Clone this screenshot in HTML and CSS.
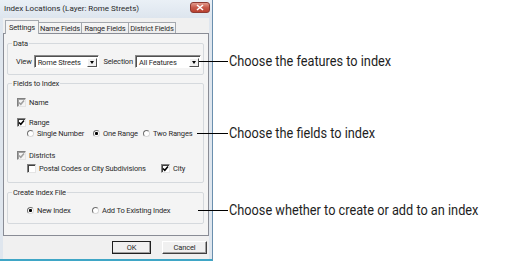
FILE: index.html
```html
<!DOCTYPE html>
<html lang="en">
<head>
  <meta charset="UTF-8">
  <title>Index Locations</title>
  <link rel="stylesheet" href="styles.css">
</head>
<body>
  <div class="figure">
    <div class="window">
      <div class="titlebar">
        <span class="title">Index Locations (Layer: Rome Streets)</span>
        <span class="close">
          <svg width="8" height="7" viewBox="0 0 8 7"><path d="M1 1L7 6M7 1L1 6" stroke="#fff" stroke-width="1.6" fill="none"/></svg>
        </span>
      </div>
      <div class="client">
        <div class="tabs">
          <span class="tab active w-settings">Settings</span>
          <span class="tab w-name">Name Fields</span>
          <span class="tab w-range">Range Fields</span>
          <span class="tab w-district">District Fields</span>
        </div>
        <div class="panel">
          <fieldset class="group group-data">
            <legend>Data</legend>
            <div class="row-data">
              <span>View</span>
              <div class="combo w-view"><span class="combo-text">Rome Streets</span><span class="combo-btn"><i></i></span></div>
              <span class="spacer"></span>
              <span>Selection</span>
              <div class="combo w-selection"><span class="combo-text">All Features</span><span class="combo-btn"><i></i></span></div>
            </div>
          </fieldset>

          <fieldset class="group group-fields">
            <legend>Fields to Index</legend>
            <div class="opt row-top">
              <span class="check disabled"><svg viewBox="0 0 7 7"><path d="M1 3.4L2.8 5.3L6 1.4" /></svg></span>
              <span>Name</span>
            </div>
            <div class="opt row-range">
              <span class="check"><svg viewBox="0 0 7 7"><path d="M1 3.4L2.8 5.3L6 1.4" /></svg></span>
              <span>Range</span>
            </div>
            <div class="radios row-sub">
              <div class="opt w-single"><span class="radio"></span><span>Single Number</span></div>
              <div class="opt w-one"><span class="radio on"></span><span>One Range</span></div>
              <div class="opt"><span class="radio"></span><span>Two Ranges</span></div>
            </div>
            <div class="opt row-districts">
              <span class="check disabled"><svg viewBox="0 0 7 7"><path d="M1 3.4L2.8 5.3L6 1.4" /></svg></span>
              <span>Districts</span>
            </div>
            <div class="radios row-sub row-postal">
              <div class="opt w-postal"><span class="check"></span><span>Postal Codes or City Subdivisions</span></div>
              <div class="opt"><span class="check"><svg viewBox="0 0 7 7"><path d="M1 3.4L2.8 5.3L6 1.4" /></svg></span><span>City</span></div>
            </div>
          </fieldset>

          <fieldset class="group group-create">
            <legend>Create Index File</legend>
            <div class="radios row-sub">
              <div class="opt w-new"><span class="radio on"></span><span>New Index</span></div>
              <div class="opt"><span class="radio"></span><span>Add To Existing Index</span></div>
            </div>
          </fieldset>
        </div>
        <div class="buttons">
          <span class="btn default w-ok">OK</span>
          <span class="btn w-cancel">Cancel</span>
        </div>
      </div>
    </div>

    <div class="callout c-features"><span class="callout-line"></span><span class="callout-text">Choose the features to index</span></div>
    <div class="callout c-fields"><span class="callout-line"></span><span class="callout-text">Choose the fields to index</span></div>
    <div class="callout c-create"><span class="callout-line"></span><span class="callout-text">Choose whether to create or add to an index</span></div>
  </div>
</body>
</html>
```

FILE: styles.css
```css
body {
  margin: 0;
  background-color: #fff;
}
.figure {
  position: relative;
  width: 520px;
  height: 261px;
}
.window {
  width: 213px;
  height: 261px;
  box-sizing: border-box;
  background-color: #dfe6ee;
  border-right: 1px solid #6a8fae;
  border-bottom: 2px solid #3fa6c6;
  display: flex;
  flex-direction: column;
  font-family: Roboto, "Liberation Sans", sans-serif;
  font-size: 7.5px;
  letter-spacing: -0.15px;
  color: #2a2a2a;
  white-space: nowrap;
}
.titlebar {
  height: 18px;
  display: flex;
  justify-content: space-between;
  align-items: flex-start;
  padding: 0 2px 0 4px;
  background: linear-gradient(#eaf0f6, #dde5ee);
}
.title {
  line-height: 17px;
  font-size: 8px;
  letter-spacing: 0;
}
.close {
  margin-top: 2px;
  width: 20px;
  height: 11px;
  box-sizing: border-box;
  border: 1px solid #8d3a32;
  border-radius: 3px;
  background: linear-gradient(#e39a8c, #c75b4c 50%, #b8402f);
  display: flex;
  align-items: center;
  justify-content: center;
}
.client {
  flex: 1;
  margin: 0 3px;
  background-color: #f0f0f0;
  display: flex;
  flex-direction: column;
}
.tabs {
  height: 15px;
  display: flex;
  align-items: flex-end;
  padding-left: 2px;
}
.tab {
  height: 11px;
  box-sizing: border-box;
  border: 1px solid #a4a8ae;
  border-left: none;
  border-bottom: none;
  display: flex;
  align-items: center;
  justify-content: center;
  background: linear-gradient(#f6f6f6, #ececec);
}
.tab.active {
  position: relative;
  z-index: 1;
  height: 14px;
  margin-bottom: -1px;
  border-left: 1px solid #a4a8ae;
  background: #f4f4f4;
  padding-bottom: 1px;
}
.w-settings { width: 34px; }
.w-name { width: 43px; }
.w-range { width: 47px; }
.w-district { width: 47px; }
.panel {
  border: 1px solid #898c95;
  background-color: #f4f4f4;
  padding: 4px 4px 11px 3px;
}
.group {
  margin: 0;
  padding: 0;
  border: 1px solid #d5d9dd;
  border-radius: 2px;
  min-width: 0;
}
.group legend {
  margin-left: 4px;
  padding: 0 1px;
  line-height: 11px;
}
.group-data {
  padding: 6px 2px 6px 0;
}
.group-fields {
  margin-top: 3px;
  padding: 8px 0;
}
.group-create {
  margin-top: 4px;
  padding: 7px 0;
}
.row-data {
  display: flex;
  align-items: center;
  height: 13px;
  padding-left: 8px;
}
.spacer {
  flex: 1;
}
.combo {
  height: 13px;
  box-sizing: border-box;
  display: flex;
  align-items: center;
  border: 1px solid;
  border-color: #8a8a8a #fff #fff #8a8a8a;
  box-shadow: inset 1px 1px #505050;
  background-color: #fff;
  padding: 1px 1px 0 1px;
}
.w-view {
  width: 65px;
  margin-left: 2px;
}
.w-selection {
  width: 66px;
  margin-left: 2px;
}
.combo-text {
  flex: 1;
  padding-left: 2px;
}
.combo-btn {
  width: 10px;
  height: 9px;
  box-sizing: border-box;
  border: 1px solid;
  border-color: #fff #505050 #505050 #fff;
  background-color: #f0f0f0;
  display: flex;
  align-items: center;
  justify-content: center;
}
.combo-btn i {
  border-left: 2.5px solid transparent;
  border-right: 2.5px solid transparent;
  border-top: 3px solid #000;
}
.opt {
  display: flex;
  align-items: center;
  height: 11px;
}
.group-fields > .opt {
  padding-left: 9px;
}
.radios {
  display: flex;
  height: 11px;
}
.row-sub {
  padding-left: 19px;
}
.row-range {
  margin-top: 9px;
}
.row-districts {
  margin-top: 11px;
}
.row-postal {
  margin-top: 2px;
}
.w-single { width: 66px; }
.w-one { width: 50px; }
.w-postal { width: 134px; }
.w-new { width: 65px; }
.check {
  width: 9px;
  height: 9px;
  box-sizing: border-box;
  border: 1px solid;
  border-color: #808080 #e4e4e4 #e4e4e4 #808080;
  box-shadow: inset 1px 1px #404040;
  background-color: #fff;
  margin-right: 3px;
  display: flex;
}
.check svg {
  width: 7px;
  height: 7px;
}
.check path {
  fill: none;
  stroke: #000;
  stroke-width: 1.5;
}
.check.disabled {
  background-color: #f4f4f4;
  box-shadow: inset 1px 1px #a0a0a0;
}
.check.disabled path {
  stroke: #a0a0a0;
}
.radio {
  width: 7px;
  height: 7px;
  box-sizing: border-box;
  border-radius: 50%;
  border: 1px solid;
  border-color: #707070 #d8d8d8 #d8d8d8 #707070;
  background-color: #fff;
  margin-right: 3px;
}
.radio.on {
  background: radial-gradient(circle, #000 1.3px, #fff 1.8px);
}
.buttons {
  display: flex;
  justify-content: flex-end;
  margin-top: 5px;
  padding-right: 2px;
}
.btn {
  height: 13px;
  box-sizing: border-box;
  border: 1px solid;
  border-color: #fff #404040 #404040 #fff;
  box-shadow: inset -1px -1px #a0a0a0;
  background-color: #f0f0f0;
  display: flex;
  align-items: center;
  justify-content: center;
}
.btn.default {
  outline: 1px solid #202020;
  outline-offset: -1px;
}
.w-ok {
  width: 39px;
}
.w-cancel {
  width: 45px;
  margin-left: 11px;
}
.callout {
  position: absolute;
  display: flex;
  align-items: center;
  height: 16px;
}
.callout-line {
  height: 1px;
  background-color: #000;
}
.callout-text {
  display: inline-block;
  margin-left: 1px;
  font-family: Roboto, "Liberation Sans", sans-serif;
  font-size: 14px;
  color: #1e1e1e;
  white-space: nowrap;
  transform: scaleX(0.91);
  transform-origin: left center;
}
.c-features {
  left: 199px;
  top: 53px;
}
.c-features .callout-line { width: 29px; }
.c-fields {
  left: 197px;
  top: 125px;
}
.c-fields .callout-line { width: 31px; }
.c-create {
  left: 198px;
  top: 202px;
}
.c-create .callout-line { width: 30px; }
```
